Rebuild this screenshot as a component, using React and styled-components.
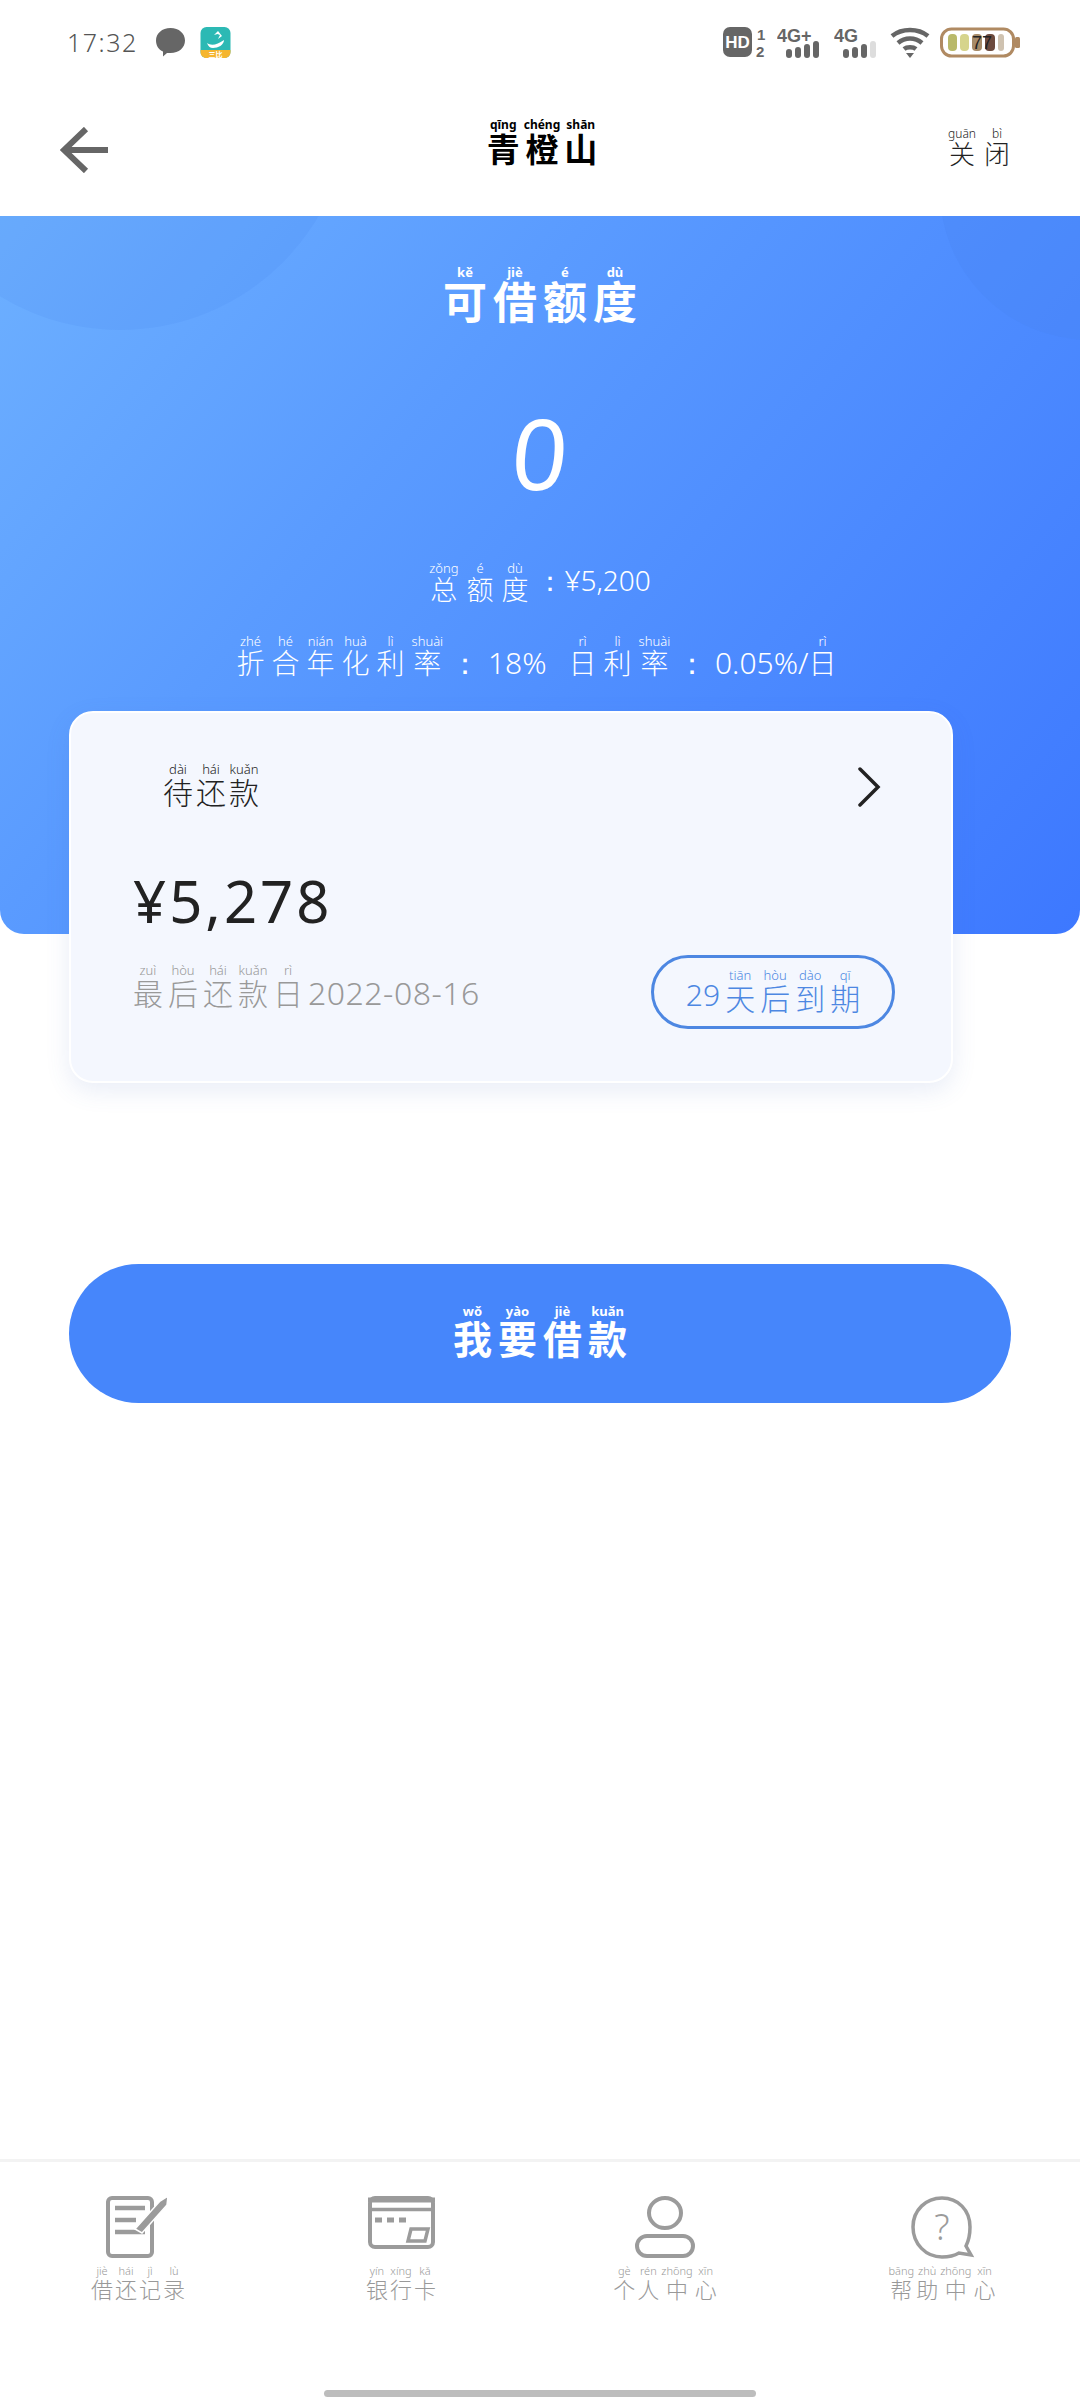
import styled, { createGlobalStyle } from "styled-components";

const Global = createGlobalStyle`
  html, body { margin: 0; padding: 0; background: #fff; }
  body { font-family: "Noto Sans CJK SC", "Noto Sans", sans-serif; }
  rt { font-family: "Noto Sans", sans-serif; line-height: 1; }
`;

const Page = styled.div`
  width: 1080px;
  height: 2400px;
  display: flex;
  flex-direction: column;
  background: #fff;
  overflow: hidden;
`;

const StatusBar = styled.div`
  height: 84px;
  box-sizing: border-box;
  padding: 27px 58px 0 67px;
  display: flex;
  justify-content: space-between;
  align-items: flex-start;
`;

const StatusGroup = styled.div`
  display: flex;
  align-items: flex-start;
`;

const Time = styled.span`
  font: 300 25px/30px "Noto Sans", sans-serif;
  letter-spacing: 1.5px;
  color: #555;
  width: 88px;
`;

const NavBar = styled.div`
  height: 132px;
  box-sizing: border-box;
  padding: 0 70px 0 60px;
  display: grid;
  grid-template-columns: 1fr auto 1fr;
  align-items: center;
`;

const Title = styled.div`
  font-size: 33px;
  font-weight: 700;
  line-height: 40px;
  color: #000;
  margin: 0 0 14px 14px;
  ruby { margin: 0 2px; }
  rt { font-size: 12px; font-weight: 700; }
`;

const Close = styled.div`
  justify-self: end;
  font-size: 26px;
  font-weight: 300;
  line-height: 36px;
  color: #222;
  margin-bottom: 2px;
  ruby { margin-left: 8px; }
  rt { font-size: 12px; }
`;

const Hero = styled.div`
  position: relative;
  height: 718px;
  box-sizing: border-box;
  padding-top: 50px;
  display: flex;
  flex-direction: column;
  align-items: center;
  color: #fff;
  overflow: hidden;
  border-radius: 0 0 24px 24px;
  background: linear-gradient(130deg, #6db0ff 0%, #5a9bff 35%, #3d78ff 100%);
`;

const Circle = styled.div`
  position: absolute;
  border-radius: 50%;
  left: ${(p) => p.$x}px;
  top: ${(p) => p.$y}px;
  width: ${(p) => p.$size}px;
  height: ${(p) => p.$size}px;
  background: ${(p) => p.$bg};
`;

const HeroTitle = styled.div`
  position: relative;
  font-size: 44px;
  font-weight: 700;
  line-height: 60px;
  ruby { margin: 0 3px; }
  rt { font-size: 13px; font-weight: 700; }
`;

const Amount = styled.div`
  position: relative;
  margin-top: 62px;
  font: 400 98px/120px "Noto Sans", sans-serif;
  transform: skewX(-5deg);
`;

const HeroTotal = styled.div`
  position: relative;
  margin-top: 50px;
  display: flex;
  font-size: 27px;
  font-weight: 300;
  line-height: 36px;
  ruby { margin-right: 8px; }
  rt { font-size: 13px; }
`;

const HeroRate = styled.div`
  position: relative;
  margin-top: 28px;
  font-size: 28px;
  font-weight: 300;
  line-height: 40px;
  white-space: pre;
  ruby { margin-right: 7px; }
  rt { font-size: 13px; }
`;

const Latin = styled.span`
  font-family: "Noto Sans", sans-serif;
  font-weight: 300;
  font-size: ${(p) => p.$size || 30}px;
  letter-spacing: ${(p) => p.$track || 0}px;
  margin-right: ${(p) => p.$after || 0}px;
`;

const Card = styled.div`
  margin: -223px 127px 0 69px;
  height: 372px;
  box-sizing: border-box;
  position: relative;
  background: #f4f7fe;
  border: 2px solid #fff;
  border-radius: 24px;
  box-shadow: 0 8px 24px rgba(70, 110, 190, 0.12);
  padding: 50px 56px 0 62px;
  display: flex;
  flex-direction: column;
`;

const CardHead = styled.div`
  display: flex;
  justify-content: space-between;
  align-items: center;
  padding: 0 14px 0 30px;
`;

const CardLabel = styled.div`
  font-size: 30px;
  font-weight: 300;
  line-height: 40px;
  color: #222;
  ruby { margin-right: 3px; }
  rt { font-size: 13px; }
`;

const Due = styled.div`
  margin-top: 55px;
  font: 400 58px/70px "Noto Sans", sans-serif;
  letter-spacing: 3px;
  color: #222;
`;

const CardFoot = styled.div`
  margin-top: 19px;
  display: flex;
  justify-content: space-between;
  align-items: center;
`;

const LastDate = styled.div`
  font-size: 30px;
  font-weight: 300;
  line-height: 40px;
  color: #999;
  margin-bottom: 8px;
  ruby { margin-right: 5px; }
  rt { font-size: 13px; }
`;

const DaysPill = styled.div`
  width: 244px;
  height: 74px;
  box-sizing: border-box;
  border: 3px solid #4d87e2;
  border-radius: 37px;
  color: #4d87e2;
  font-size: 30px;
  font-weight: 300;
  display: flex;
  align-items: center;
  justify-content: center;
  padding-top: 4px;
  ruby { margin-left: 5px; }
  rt { font-size: 13px; }
`;

const BorrowButton = styled.button`
  margin: 181px 69px 0 69px;
  height: 139px;
  border: 0;
  border-radius: 70px;
  background: #4686fb;
  color: #fff;
  font-family: inherit;
  font-size: 39px;
  font-weight: 700;
  line-height: 50px;
  padding: 2px 0 0 0;
  ruby { margin: 0 3px; }
  rt { font-size: 13px; font-weight: 700; }
`;

const TabBar = styled.div`
  margin-top: auto;
  height: 241px;
  box-sizing: border-box;
  border-top: 3px solid #f3f3f3;
  padding-top: 34px;
  display: grid;
  grid-template-columns: 276px 250px 278px 276px;
  align-content: start;
  position: relative;
`;

const Tab = styled.div`
  display: flex;
  flex-direction: column;
  align-items: center;
  color: #999;
`;

const TabIcon = styled.svg`
  width: 72px;
  height: 66px;
  display: block;
  fill: none;
  stroke: #9b9b9b;
  stroke-width: 4;
`;

const TabLabel = styled.div`
  margin-top: 4px;
  font-size: 22px;
  font-weight: 300;
  line-height: 30px;
  white-space: nowrap;
  ruby { margin: 0 1px; }
  rt { font-size: 11px; }
`;

const HomeBar = styled.div`
  position: absolute;
  left: 324px;
  bottom: 3px;
  width: 432px;
  height: 7px;
  border-radius: 4px;
  background: #bdbdbd;
`;

const Zh = ({ t, p }) => {
  const py = p.split(" ");
  return [...t].map((c, i) => (
    <ruby key={i}>
      {c}
      <rt>{py[i]}</rt>
    </ruby>
  ));
};

const StatusSvg = styled.svg`
  display: block;
  margin-left: ${(p) => p.$ml || 0}px;
`;

const Bars = ({ dim }) => (
  <g fill="#666">
    <rect x="9" y="22" width="6" height="9" rx="3" />
    <rect x="18" y="20" width="6" height="11" rx="3" />
    <rect x="27" y="17" width="6" height="14" rx="3" />
    <rect x="36" y="14" width="6" height="17" rx="3" fill={dim ? "#ddd" : "#666"} />
  </g>
);

const StatusIcons = () => (
  <StatusGroup>
    <StatusSvg width="45" height="32" viewBox="0 0 45 32">
      <rect x="0" y="0" width="29" height="30" rx="7" fill="#666" />
      <text x="14.5" y="21" textAnchor="middle" fontFamily="Liberation Sans" fontWeight="700" fontSize="17" fill="#fff">HD</text>
      <text x="34" y="13" fontFamily="Liberation Sans" fontWeight="700" fontSize="15" fill="#666">1</text>
      <text x="33" y="30" fontFamily="Liberation Sans" fontWeight="700" fontSize="15" fill="#666">2</text>
    </StatusSvg>
    <StatusSvg $ml={9} width="46" height="32" viewBox="0 0 46 32">
      <text x="0" y="15" fontFamily="Liberation Sans" fontWeight="700" fontSize="18" fill="#666">4G+</text>
      <Bars />
    </StatusSvg>
    <StatusSvg $ml={11} width="46" height="32" viewBox="0 0 46 32">
      <text x="0" y="15" fontFamily="Liberation Sans" fontWeight="700" fontSize="18" fill="#666">4G</text>
      <Bars dim />
    </StatusSvg>
    <StatusSvg $ml={10} width="40" height="32" viewBox="0 0 40 32">
      <g fill="none" stroke="#666" strokeWidth="4.5">
        <path d="M2 9 C12 1 28 1 38 9" />
        <path d="M8 16 C15 10 25 10 32 16" />
        <path d="M14 22 C17 19.500 23 19.500 26 22" />
      </g>
      <path d="M16 26 L24 26 L20 31 Z" fill="#666" />
    </StatusSvg>
    <StatusSvg $ml={10} width="82" height="32" viewBox="0 0 82 32">
      <rect x="1.500" y="2" width="72" height="27" rx="10" fill="#fff" stroke="#b08a62" strokeWidth="3" />
      <rect x="75" y="10" width="5" height="11" rx="1.500" fill="#b08a62" />
      <rect x="8" y="7" width="9" height="17" rx="4" fill="#b9b96a" />
      <rect x="20" y="7" width="9" height="17" rx="4" fill="#d6d48c" />
      <rect x="32" y="7" width="10" height="17" rx="4" fill="#a78b68" />
      <rect x="45" y="7" width="10" height="17" rx="4" fill="#6d4a3d" />
      <rect x="58" y="7" width="6" height="17" rx="3" fill="#cfc2b0" />
      <text x="42" y="22" textAnchor="middle" fontFamily="Liberation Sans" fontWeight="400" fontSize="18" fill="#222">77</text>
    </StatusSvg>
  </StatusGroup>
);

export default function App() {
  return (
    <Page>
      <Global />
      <StatusBar>
        <StatusGroup>
          <Time>17:32</Time>
          <StatusSvg width="31" height="30" viewBox="0 0 31 30">
            <path d="M15.500 1 C24 1 30 6.500 30 13.500 C30 20.500 24 26 15.500 26 L12 26 L8 29.500 L8 24.500 C3.500 22.500 1 18.500 1 13.500 C1 6.500 7 1 15.500 1 Z" fill="#666" />
          </StatusSvg>
          <StatusSvg $ml={14} width="31" height="32" viewBox="0 0 31 32">
            <rect x="0.500" y="0" width="30" height="31" rx="6" fill="#2cb9b4" />
            <path d="M0.500 23 H30.500 V25 C30.500 28.500 28 31 24.500 31 H6.500 C3 31 0.500 28.500 0.500 25 Z" fill="#f5b52e" />
            <path d="M7 16 C11 19 17 18 24 13 C24 18 18 21 13 21 C10 21 8 19 7 16 Z M14 8 L18 4 L22 9 L18 12 L20 8 L17.500 7 Z" fill="#fff" />
            <text x="15.500" y="30" textAnchor="middle" fontSize="7" fontWeight="700" fill="#fff">三比</text>
          </StatusSvg>
        </StatusGroup>
        <StatusIcons />
      </StatusBar>

      <NavBar>
        <svg width="48" height="46" viewBox="0 0 48 46" fill="none" stroke="#666" strokeWidth="6">
          <path d="M26 2 L4 23 L26 44 M4 23 H48" />
        </svg>
        <Title>
          <Zh t="青橙山" p="qīng chéng shān" />
        </Title>
        <Close>
          <Zh t="关闭" p="guān bì" />
        </Close>
      </NavBar>

      <Hero>
        <Circle $x={-110} $y={-346} $size={460} $bg="rgba(60, 120, 230, 0.1)" />
        <Circle $x={940} $y={-176} $size={300} $bg="rgba(70, 130, 240, 0.25)" />
        <HeroTitle>
          <Zh t="可借额度" p="kě jiè é dù" />
        </HeroTitle>
        <Amount>0</Amount>
        <HeroTotal>
          <Zh t="总额度" p="zǒng é dù" />
          <Latin $size={28}>：¥5,200</Latin>
        </HeroTotal>
        <HeroRate>
          <Zh t="折合年化利率" p="zhé hé nián huà lì shuài" />
          <Latin $size={30} $after={22}>： 18%</Latin>
          <Zh t="日利率" p="rì lì shuài" />
          <Latin $size={30}>： 0.05%/</Latin>
          <Zh t="日" p="rì" />
        </HeroRate>
      </Hero>

      <Card>
        <CardHead>
          <CardLabel>
            <Zh t="待还款" p="dài hái kuǎn" />
          </CardLabel>
          <svg width="24" height="40" viewBox="0 0 24 40" fill="none" stroke="#222" strokeWidth="3.500" strokeLinecap="round">
            <path d="M3 2 L21 20 L3 38" />
          </svg>
        </CardHead>
        <Due>¥5,278</Due>
        <CardFoot>
          <LastDate>
            <Zh t="最后还款日" p="zuì hòu hái kuǎn rì" />
            <Latin $size={32} $track={0.5}>2022-08-16</Latin>
          </LastDate>
          <DaysPill>
            <Latin>29</Latin>
            <Zh t="天后到期" p="tiān hòu dào qī" />
          </DaysPill>
        </CardFoot>
      </Card>

      <BorrowButton>
        <Zh t="我要借款" p="wǒ yào jiè kuǎn" />
      </BorrowButton>

      <TabBar>
        <Tab>
          <TabIcon viewBox="0 0 72 66">
            <rect x="6" y="2" width="44" height="58" rx="4" />
            <path d="M13 12 H43 M13 24 H34 M13 36 H43" strokeWidth="4.500" />
            <path d="M33 33 L58 5 L66 0 L65 9 L40 37 Z" fill="#9b9b9b" stroke="#fff" strokeWidth="1.500" />
          </TabIcon>
          <TabLabel>
            <Zh t="借还记录" p="jiè hái jì lù" />
          </TabLabel>
        </Tab>
        <Tab>
          <TabIcon viewBox="0 0 72 66">
            <rect x="5" y="2" width="63" height="49" rx="5" />
            <path d="M3 4 H70" strokeWidth="5" />
            <path d="M3 13.500 H70" strokeWidth="3.500" />
            <path d="M10 24 H45" strokeDasharray="7 5" strokeWidth="5" />
            <path d="M46 33 H63 L60 45 H43 Z" strokeWidth="3.500" />
          </TabIcon>
          <TabLabel>
            <Zh t="银行卡" p="yín xíng kǎ" />
          </TabLabel>
        </Tab>
        <Tab>
          <TabIcon viewBox="0 0 72 66">
            <ellipse cx="36" cy="17" rx="16" ry="15" />
            <rect x="8" y="40" width="56" height="20" rx="10" />
          </TabIcon>
          <TabLabel>
            <Zh t="个人中心" p="gè rén zhōng xīn" />
          </TabLabel>
        </Tab>
        <Tab>
          <TabIcon viewBox="0 0 72 66">
            <path d="M36 2 C52 2 64 14 64 31 C64 39 62 46 60 50 L65 59 L53 57 C48 60 42 61 36 61 C20 61 7 48 7 31 C7 14 20 2 36 2 Z" strokeWidth="3.500" />
            <text x="36" y="44" textAnchor="middle" fontSize="36" fontFamily="Noto Sans" fontWeight="300" fill="#9b9b9b" stroke="none">?</text>
          </TabIcon>
          <TabLabel>
            <Zh t="帮助中心" p="bāng zhù zhōng xīn" />
          </TabLabel>
        </Tab>
        <HomeBar />
      </TabBar>
    </Page>
  );
}
